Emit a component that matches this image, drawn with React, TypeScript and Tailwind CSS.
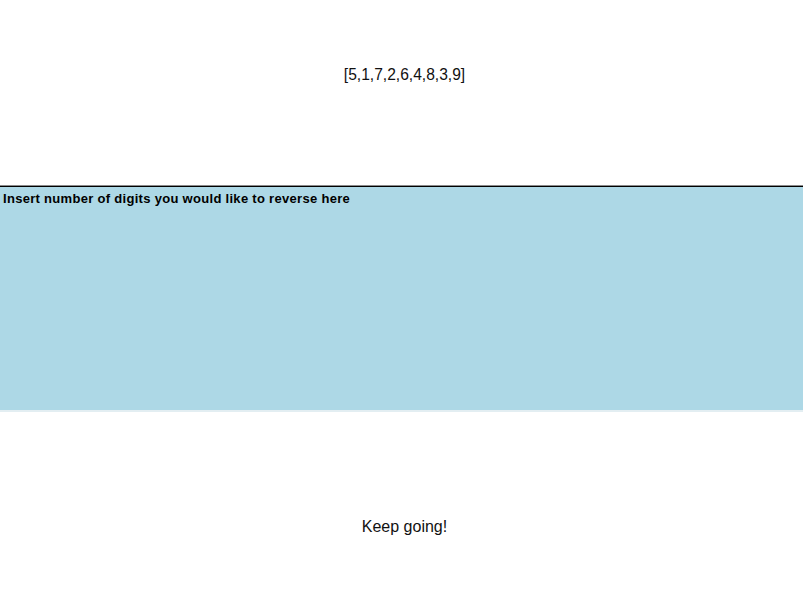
export default function App() {
  const digits = [5, 1, 7, 2, 6, 4, 8, 3, 9];

  return (
    <main className="w-[803px] h-[598px] bg-white font-['Liberation_Sans',Arial,sans-serif] text-black">
      {/* digits */}
      <div className="h-[185px] pt-[65px] pl-[6px] text-center text-[15.6px] leading-[20px] text-[#111]">
        [{digits.join(',')}]
      </div>
      {/* input */}
      <div className="border-t border-t-[#8a8a8a]">
        <textarea
          readOnly
          placeholder="Insert number of digits you would like to reverse here"
          className="block w-full h-[226px] resize-none bg-[#add8e6] border-0 border-t border-t-black border-b-2 border-b-[#e3eef2] px-[3px] pt-[4px] text-[13px] leading-[16px] tracking-[0.3px] font-bold outline-none placeholder:text-black placeholder:opacity-100"
        />
      </div>
      {/* status */}
      <div className="pt-[105px] pl-[6px] text-center text-[16px] leading-[20px] text-[#111]">Keep going!</div>
    </main>
  );
}
